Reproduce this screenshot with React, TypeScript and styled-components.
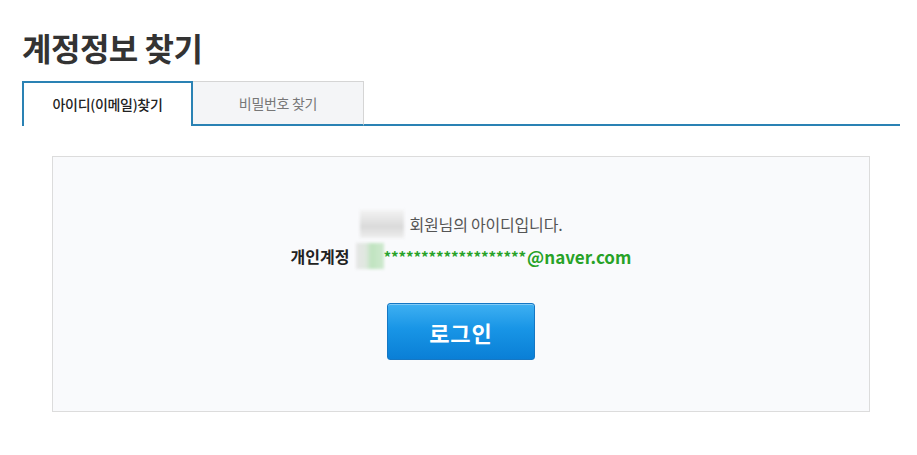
import React from 'react';
import styled, { createGlobalStyle } from 'styled-components';

const GlobalStyle = createGlobalStyle`
  html, body {
    margin: 0;
    padding: 0;
    background: #ffffff;
  }
  body {
    font-family: 'Noto Sans CJK KR', 'Noto Sans', sans-serif;
    color: #333;
  }
`;

const Page = styled.div`
  width: 878px;
  padding: 23px 0 0 22px;
`;

const Title = styled.h1`
  margin: 0;
  font-size: 32px;
  line-height: 48px;
  font-weight: 700;
  color: #333;
  letter-spacing: -0.5px;
`;

const TabBar = styled.div`
  display: flex;
  margin-top: 10px;
  height: 45px;
`;

const Tab = styled.div<{ active?: boolean }>`
  width: 171px;
  box-sizing: border-box;
  display: flex;
  align-items: center;
  justify-content: center;
  font-size: 14px;
  letter-spacing: -0.3px;
  font-weight: ${({ active }) => (active ? 500 : 400)};
  color: ${({ active }) => (active ? '#222' : '#777')};
  background: ${({ active }) => (active ? '#fff' : '#f4f5f7')};
  border-top: ${({ active }) => (active ? '2px solid #2a82b4' : '1px solid #d5d5d5')};
  border-left: ${({ active }) => (active ? '2px solid #2a82b4' : 'none')};
  border-right: ${({ active }) => (active ? '2px solid #2a82b4' : '1px solid #d5d5d5')};
  border-bottom: ${({ active }) => (active ? 'none' : '2px solid #2a82b4')};
  padding-bottom: ${({ active }) => (active ? '2px' : '0')};
`;

const TabFill = styled.div`
  flex: 1;
  border-bottom: 2px solid #2a82b4;
`;

const ResultBox = styled.div`
  margin: 30px 0 0 30px;
  width: 818px;
  height: 256px;
  box-sizing: border-box;
  border: 1px solid #dcdcdc;
  background: #f9fafc;
  display: flex;
  flex-direction: column;
  align-items: center;
  padding-top: 51px;
`;

const Line = styled.div`
  display: flex;
  align-items: center;
  height: 32px;
`;

const Notice = styled.span`
  font-size: 16px;
  color: #555;
  margin-left: 6px;
  letter-spacing: -0.2px;
`;

const Label = styled.span`
  font-size: 16px;
  font-weight: 700;
  color: #222;
  margin-right: 6px;
`;

const Stars = styled.span`
  font-size: 15px;
  font-weight: 700;
  color: #27a227;
  letter-spacing: -0.1px;
`;

const Domain = styled.span`
  font-size: 17px;
  font-weight: 700;
  color: #27a227;
  margin-left: 1px;
`;

const Blur = styled.span<{ w: number; h: number; tint?: boolean }>`
  display: inline-block;
  width: ${({ w }) => w}px;
  height: ${({ h }) => h}px;
  background: ${({ tint }) =>
    tint
      ? 'linear-gradient(90deg, #e6e6e6 0%, #dfe8df 35%, #bfe3bf 55%, #cfe9cf 100%)'
      : 'linear-gradient(180deg, #f3f3f3 0%, #e2e2e2 40%, #d9d9d9 60%, #efefef 100%)'};
  filter: blur(1.5px);
`;

const LoginButton = styled.button`
  margin-top: 31px;
  width: 148px;
  height: 57px;
  border: 1px solid #1577c4;
  border-radius: 3px;
  background: linear-gradient(180deg, #3fb0f2 0%, #1895e6 45%, #0a7fd6 100%);
  color: #fff;
  font-family: 'Noto Sans CJK KR', sans-serif;
  font-size: 22px;
  font-weight: 700;
  letter-spacing: 1px;
  cursor: pointer;
  box-shadow: inset 0 1px 0 rgba(255, 255, 255, 0.35);
`;

export default function App(): React.ReactElement {
  return (
    <Page>
      <GlobalStyle />
      <Title>계정정보 찾기</Title>
      <TabBar>
        <Tab active>아이디(이메일)찾기</Tab>
        <Tab>비밀번호 찾기</Tab>
        <TabFill />
      </TabBar>
      <ResultBox>
        <Line>
          <Blur w={44} h={28} />
          <Notice>회원님의 아이디입니다.</Notice>
        </Line>
        <Line>
          <Label>개인계정</Label>
          <Blur w={28} h={26} tint />
          <Stars>*******************</Stars>
          <Domain>@naver.com</Domain>
        </Line>
        <LoginButton>로그인</LoginButton>
      </ResultBox>
    </Page>
  );
}
